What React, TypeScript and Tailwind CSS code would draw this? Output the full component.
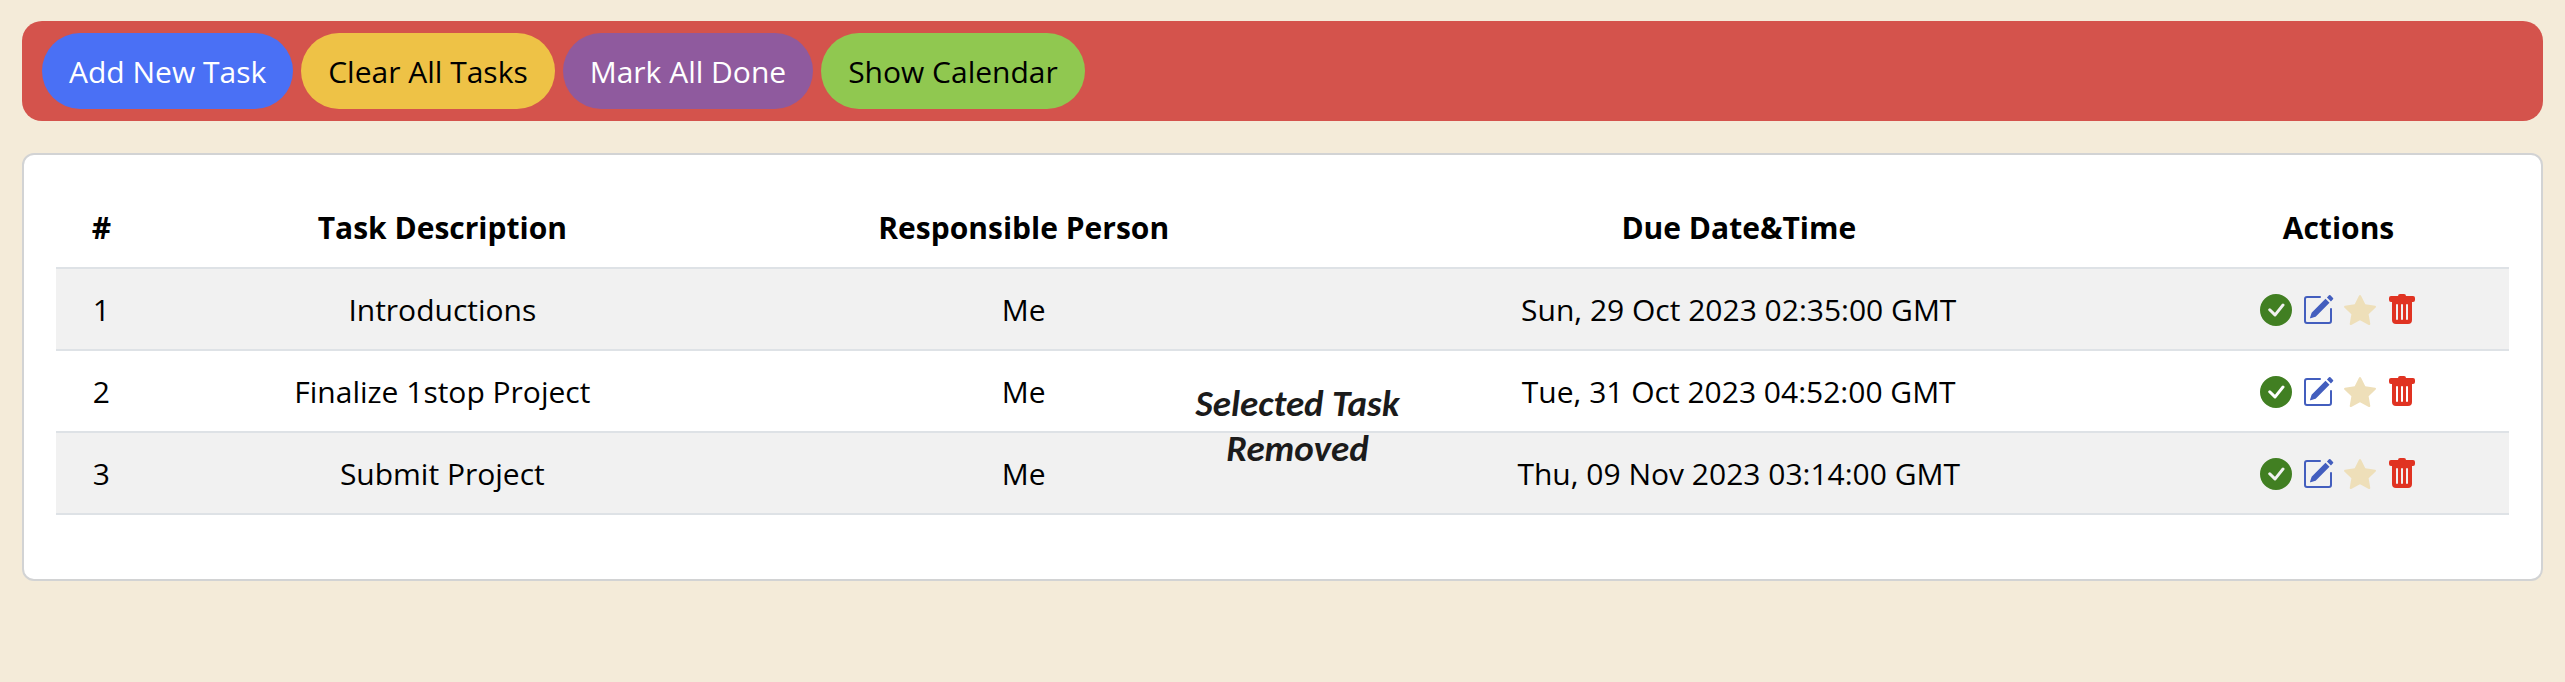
import { BsCheckCircleFill, BsPencilSquare, BsStarFill, BsTrashFill } from "react-icons/bs";

const tasks = [
  { id: 1, description: "Introductions", person: "Me", due: "Sun, 29 Oct 2023 02:35:00 GMT" },
  { id: 2, description: "Finalize 1stop Project", person: "Me", due: "Tue, 31 Oct 2023 04:52:00 GMT" },
  { id: 3, description: "Submit Project", person: "Me", due: "Thu, 09 Nov 2023 03:14:00 GMT" },
];

const toolbar = [
  { label: "Add New Task", style: "bg-[#4a70f5] text-white" },
  { label: "Clear All Tasks", style: "bg-[#eec246] text-black" },
  { label: "Mark All Done", style: "bg-[#8f5a9e] text-white" },
  { label: "Show Calendar", style: "bg-[#90c850] text-black" },
];

const columns = [
  { label: "#", width: "w-[3.7%]" },
  { label: "Task Description", width: "w-[24.1%]" },
  { label: "Responsible Person", width: "w-[23.3%]" },
  { label: "Due Date&Time", width: "w-[35%]" },
  { label: "Actions", width: "w-[13.9%]" },
];

const actions = [
  { label: "Mark done", Icon: BsCheckCircleFill, color: "text-[#417f22]" },
  { label: "Edit", Icon: BsPencilSquare, color: "text-[#435ebe]" },
  { label: "Star", Icon: BsStarFill, color: "text-[#eedfb9]" },
  { label: "Delete", Icon: BsTrashFill, color: "text-[#e03322]" },
];

export default function App() {
  return (
    <div className="min-h-screen bg-[#f4ebd9] px-[22px] py-[21px] font-['Open_Sans','Noto_Sans',sans-serif] text-[30px] leading-[48px] text-black">
      <header className="flex flex-wrap gap-2 rounded-[20px] bg-[#d4534c] px-5 py-3">
        {toolbar.map((b) => (
          <button key={b.label} type="button" className={`rounded-full px-[27px] pt-[15px] pb-[13px] ${b.style}`}>
            {b.label}
          </button>
        ))}
      </header>

      <main className="relative mt-8 rounded-xl border-2 border-[#d2d3d4] bg-white px-8 pt-8 pb-16">
        <table className="w-full table-fixed border-collapse text-center">
          <thead>
            <tr className="border-b-2 border-[#dee2e6]">
              {columns.map((c) => (
                <th key={c.label} scope="col" className={`pt-[17px] pb-[15px] font-bold ${c.width}`}>
                  {c.label}
                </th>
              ))}
            </tr>
          </thead>
          <tbody>
            {tasks.map((t) => (
              <tr key={t.id} className="border-b-2 border-[#dee2e6] odd:bg-[#f1f1f1]">
                <td className="pt-[17px] pb-[15px]">{t.id}</td>
                <td className="pt-[17px] pb-[15px]">{t.description}</td>
                <td className="pt-[17px] pb-[15px]">{t.person}</td>
                <td className="pt-[17px] pb-[15px]">{t.due}</td>
                <td className="pt-[17px] pb-[15px]">
                  <div className="flex h-12 items-center justify-center gap-[10px]">
                    {actions.map(({ label, Icon, color }) => (
                      <button key={label} type="button" aria-label={label} className={color}>
                        <Icon className="size-8" />
                      </button>
                    ))}
                  </div>
                </td>
              </tr>
            ))}
          </tbody>
        </table>

        <div
          role="status"
          className="absolute top-[226px] left-1/2 ml-[15px] w-60 -translate-x-1/2 text-center font-['Carlito','Lato',sans-serif] text-[37px] leading-[45px] font-bold text-[#1b1b1b] italic"
        >
          Selected Task Removed
        </div>
      </main>
    </div>
  );
}
